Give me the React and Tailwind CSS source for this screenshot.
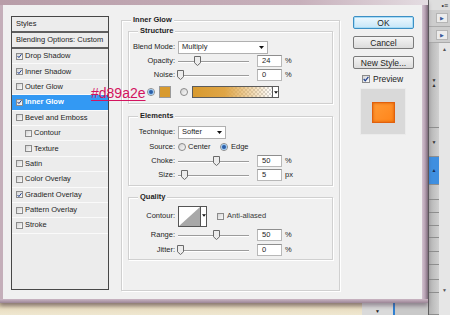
import React from "react";

const styles = [
  { name: "Drop Shadow", checked: true },
  { name: "Inner Shadow", checked: true },
  { name: "Outer Glow" },
  { name: "Inner Glow", checked: true, active: true },
  { name: "Bevel and Emboss" },
  { name: "Contour", sub: true },
  { name: "Texture", sub: true },
  { name: "Satin" },
  { name: "Color Overlay" },
  { name: "Gradient Overlay", checked: true },
  { name: "Pattern Overlay" },
  { name: "Stroke" },
];

const panelSegments = [85, 29, 28, 15, 13, 13, 12, 14, 13, 15, 13, 22];

const Arrow = ({ w = 5 }) => (
  <svg width={w} height="3" viewBox="0 0 5 3" className="shrink-0">
    <path d="M0 0H5L2.5 3Z" fill="#111" />
  </svg>
);

const CheckBox = ({ checked, big }) => (
  <div
    className={`${big ? "w-[8px] h-[8px]" : "w-[7px] h-[7px]"} shrink-0 border border-[#8b8b8b] bg-linear-to-br from-[#d4d4d4] to-[#fbfbfb] flex items-center justify-center`}
  >
    {checked && (
      <svg width="6" height="6" viewBox="0 0 6 6">
        <path d="M0.7 3 L2.3 4.9 L5.4 0.8" fill="none" stroke="#1f3f8f" strokeWidth="1.2" />
      </svg>
    )}
  </div>
);

const Radio = ({ on }) => (
  <div className="w-[8px] h-[8px] shrink-0 rounded-full border border-[#8a8a8a] bg-linear-to-br from-[#d2d2d2] to-[#fafafa] flex items-center justify-center">
    {on && <div className="w-[4px] h-[4px] rounded-full bg-[#2a5ea8] shadow-[0_0_0_1px_#9cc7ee]" />}
  </div>
);

const Slider = ({ pos }) => (
  <div className="relative w-[71px] h-[10px] flex items-center shrink-0">
    <div className="w-full h-[2px] border-t border-[#9c9c9c] border-b border-b-white mt-[2px]" />
    <svg className="absolute top-0" style={{ left: pos - 3.5 }} width="7" height="10" viewBox="0 0 7 10">
      <path d="M0.5 0.5 H6.5 V6.8 L3.5 9.5 L0.5 6.8 Z" fill="#ececec" stroke="#6a6a6a" strokeWidth="1" />
    </svg>
  </div>
);

const NumBox = ({ value, unit }) => (
  <div className="flex items-center ml-[8px]">
    <div className="w-[25px] h-[12px] bg-white border border-[#b8b8b8] border-t-[#8e8e8e] pl-[4px] flex items-center">
      {value}
    </div>
    <span className="ml-[3px]">{unit}</span>
  </div>
);

const Select = ({ value, w }) => (
  <div className={`${w} h-[13px] bg-white border border-[#b0b0b0] flex items-center justify-between pl-[3px] pr-[3px]`}>
    <span>{value}</span>
    <Arrow />
  </div>
);

const Row = ({ label, h = "h-[14px]", mt = "", children }) => (
  <div className={`flex items-center ${h} ${mt}`}>
    <div className="w-[46px] text-right shrink-0">{label}</div>
    <div className="ml-[3px] flex items-center">{children}</div>
  </div>
);

const Group = ({ title, className, children }) => (
  <div className={`border border-[#d0d0d0] shadow-[1px_1px_0_#fff,inset_1px_1px_0_#fff] flex flex-col ${className}`}>
    <div className="-mt-[6px] ml-[9px] px-[2px] w-fit h-[10px] leading-[10px] font-bold bg-[#f0f0f0]">{title}</div>
    {children}
  </div>
);

const Btn = ({ children, primary }) => (
  <div
    className={`h-[13px] w-[61px] rounded-[2px] border flex items-center justify-center text-[8.5px] ${
      primary
        ? "border-[#3c8fc4] bg-linear-to-b from-[#eef8fe] to-[#c6e6f8] shadow-[inset_0_0_0_1px_#a8dcf6]"
        : "border-[#7a7a7a] bg-linear-to-b from-[#f4f4f4] to-[#dcdcdc]"
    }`}
  >
    {children}
  </div>
);

const StyleList = () => (
  <div className="w-[98px] h-[274px] border border-[#474747] bg-[#ececec] flex flex-col shrink-0">
    <div className="h-[16px] flex items-center pl-[4px] border-b-2 border-[#5e5e5e]">Styles</div>
    <div className="h-[16px] flex items-center pl-[4px] border-b-2 border-[#5e5e5e]">Blending Options: Custom</div>
    {styles.map((s) => (
      <div
        key={s.name}
        className={`h-[15.4px] flex items-center border-b border-[#fafafa] ${s.sub ? "pl-[13px]" : "pl-[4px]"} ${
          s.active ? "bg-[#3399f3] text-white font-bold" : ""
        }`}
      >
        <CheckBox checked={s.checked} />
        <span className="ml-[2px]">{s.name}</span>
      </div>
    ))}
  </div>
);

const InnerGlow = () => (
  <Group title="Inner Glow" className="ml-[12px] mt-[4px] w-[219px] h-[271px] shrink-0">
    <div className="px-[6px] flex flex-col">
      <Group title="Structure" className="mt-[6px] h-[73px]">
        <Row label="Blend Mode:" mt="mt-[4px]">
          <Select value="Multiply" w="w-[90px]" />
        </Row>
        <Row label="Opacity:">
          <Slider pos={19} />
          <NumBox value="24" unit="%" />
        </Row>
        <Row label="Noise:">
          <Slider pos={2} />
          <NumBox value="0" unit="%" />
        </Row>
        <div className="flex items-center h-[14px] mt-[3px] pl-[18px]">
          <Radio on />
          <div className="ml-[4px] w-[12px] h-[12px] bg-[#d89a2e] border border-[#9a9a9a]" />
          <div className="ml-[9px]">
            <Radio />
          </div>
          <div className="ml-[4px] h-[12px] flex border border-[#5c5c5c]">
            <div className="w-[79px] h-full bg-[image:repeating-conic-gradient(#d8d8d8_0%_25%,#ffffff_0%_50%)] bg-[length:4px_4px]">
              <div className="w-full h-full bg-linear-to-r from-[#d89a2e] via-[#dfa546] via-40% to-[#d89a2e00]" />
            </div>
            <div className="w-[6px] bg-white border-l border-[#5c5c5c] flex items-center justify-center">
              <Arrow w={4} />
            </div>
          </div>
        </div>
      </Group>

      <Group title="Elements" className="mt-[12px] h-[70px]">
        <Row label="Technique:" mt="mt-[4px]">
          <Select value="Softer" w="w-[48px]" />
        </Row>
        <Row label="Source:" mt="mt-[1px]">
          <Radio />
          <span className="ml-[2px] w-[32px]">Center</span>
          <Radio on />
          <span className="ml-[3px]">Edge</span>
        </Row>
        <Row label="Choke:">
          <Slider pos={38} />
          <NumBox value="50" unit="%" />
        </Row>
        <Row label="Size:">
          <Slider pos={6} />
          <NumBox value="5" unit="px" />
        </Row>
      </Group>

      <Group title="Quality" className="mt-[11px] h-[63px]">
        <Row label="Contour:" h="h-[22px]" mt="mt-[3px]">
          <div className="w-[29px] h-[21px] flex border border-[#555] bg-white">
            <svg width="21" height="19" viewBox="0 0 21 19" className="shrink-0">
              <path d="M0 19 L21 0 L21 19 Z" fill="#a8a8a8" />
            </svg>
            <div className="w-[6px] border-l border-[#555] flex justify-center pt-[7px]">
              <Arrow w={4} />
            </div>
          </div>
          <div className="ml-[10px]">
            <CheckBox />
          </div>
          <span className="ml-[3px] text-[#3a3a3a]">Anti-aliased</span>
        </Row>
        <Row label="Range:" mt="mt-[1px]">
          <Slider pos={38} />
          <NumBox value="50" unit="%" />
        </Row>
        <Row label="Jitter:" mt="mt-[1px]">
          <Slider pos={2} />
          <NumBox value="0" unit="%" />
        </Row>
      </Group>
    </div>
  </Group>
);

const Buttons = () => (
  <div className="ml-[13px] flex flex-col shrink-0">
    <div className="flex flex-col gap-[7px]">
      <Btn primary>OK</Btn>
      <Btn>Cancel</Btn>
      <Btn>New Style...</Btn>
    </div>
    <div className="mt-[6px] h-[8px] flex items-center pl-[9px] text-[8.5px]">
      <CheckBox checked big />
      <span className="ml-[3px]">Preview</span>
    </div>
    <div className="mt-[5px] ml-[7px] w-[46px] h-[47px] bg-[#d9d9d9] border border-[#ebebeb] flex items-center justify-center">
      <div className="w-[23px] h-[21px] mt-[1px] bg-linear-to-br from-[#ff9a34] to-[#ff8418] border border-[#e2600c] shadow-[inset_0_0_3px_#d45a00]" />
    </div>
  </div>
);

const RightPanel = () => (
  <div className="w-[22px] h-full flex flex-col bg-[#cdcdcd] border-l border-[#5f5f5f] text-[#333] shrink-0">
    <div className="h-[10px] bg-[#dedede] flex items-center justify-end pr-[2px] text-[7px] leading-none">•≡</div>
    <div className="h-[17px] border-b border-[#aaaaaa] flex items-center justify-end pr-[2px]">
      <div className="w-[12px] h-[10px] bg-[#ececec] border border-[#b5b5b5] flex items-center justify-center text-[5px] text-[#3a5a9a]">▶</div>
    </div>
    <div className="h-[16px] border-b border-[#aaaaaa] flex items-center justify-end pr-[2px]">
      <div className="w-[12px] h-[10px] bg-[#ececec] border border-[#b5b5b5] flex items-center justify-center text-[5px] text-[#3a5a9a]">▶</div>
    </div>
    <div className="flex-1 flex">
      <div className="w-[10px] flex flex-col bg-linear-to-r from-[#b4b4b4] to-[#d0d0d0]">
        {panelSegments.map((h, i) => (
          <div
            key={i}
            style={{ height: h }}
            className={`border-b border-[#8e8e8e] flex justify-center text-[5px] leading-none ${
              i === 2 ? "bg-[#3f8fe0] items-center" : i === 0 ? "flex-col items-center justify-between py-[3px]" : "items-center"
            }`}
          >
            {i === 0 && (
              <>
                <span>▼</span>
                <span>▲</span>
                <span className="opacity-0">.</span>
              </>
            )}
            {i === 1 && <span>▼</span>}
            {i === 2 && <span className="text-[#1a2f55]">▲</span>}
          </div>
        ))}
      </div>
      <div className="flex-1 bg-[#e6e6e6] flex flex-col justify-between items-center pt-[4px] pb-[22px] text-[5px] leading-none text-[#555]">
        <span>▲</span>
        <span>▼</span>
      </div>
    </div>
  </div>
);

export default function App() {
  return (
    <div className="relative w-[450px] h-[315px] overflow-hidden flex bg-[#cfcfcf] font-['Liberation_Sans',Arial,sans-serif] text-[7.5px] leading-[10px] text-[#1e1e1e]">
      <div className="w-[428px] h-full flex flex-col shrink-0">
        <div className="relative z-10 h-[303px] flex flex-col shadow-[0_3px_4px_rgba(70,50,70,0.45)]">
          <div className="h-[5px] bg-linear-to-r from-[#b89da8] via-[#c7b0bb] via-70% to-[#e4dde2]" />
          <div className="flex-1 flex">
            <div className="w-[3px] bg-[#c4aeb9]" />
            <div className="flex-1 bg-[#f0f0f0] flex items-start pt-[11px] pl-[8px]">
              <StyleList />
              <InnerGlow />
              <Buttons />
            </div>
            <div className="w-[6px] bg-linear-to-r from-[#d2c2d0] via-[#b7a1b3] to-[#7d6b7b]" />
          </div>
          <div className="h-[4px] bg-linear-to-b from-[#cbb6c4] to-[#9b8596]" />
        </div>
        <div className="flex-1 flex">
          <div className="w-[362px] bg-linear-to-b from-[#c6b797] via-[#eadfc3] to-[#efe7d0]" />
          <div className="w-[31px] bg-[#dadada] flex items-end justify-center text-[5px] leading-none pb-[1px]">▼</div>
          <div className="w-[2px] bg-[#2f7fd0]" />
          <div className="flex-1 bg-[#c9c9c9]" />
        </div>
      </div>
      <RightPanel />
      <div className="absolute z-20 left-[91px] top-[86px] text-[14px] leading-[14px] text-[#d3145f] underline decoration-1 underline-offset-[2px]">
        #d89a2e
      </div>
    </div>
  );
}
